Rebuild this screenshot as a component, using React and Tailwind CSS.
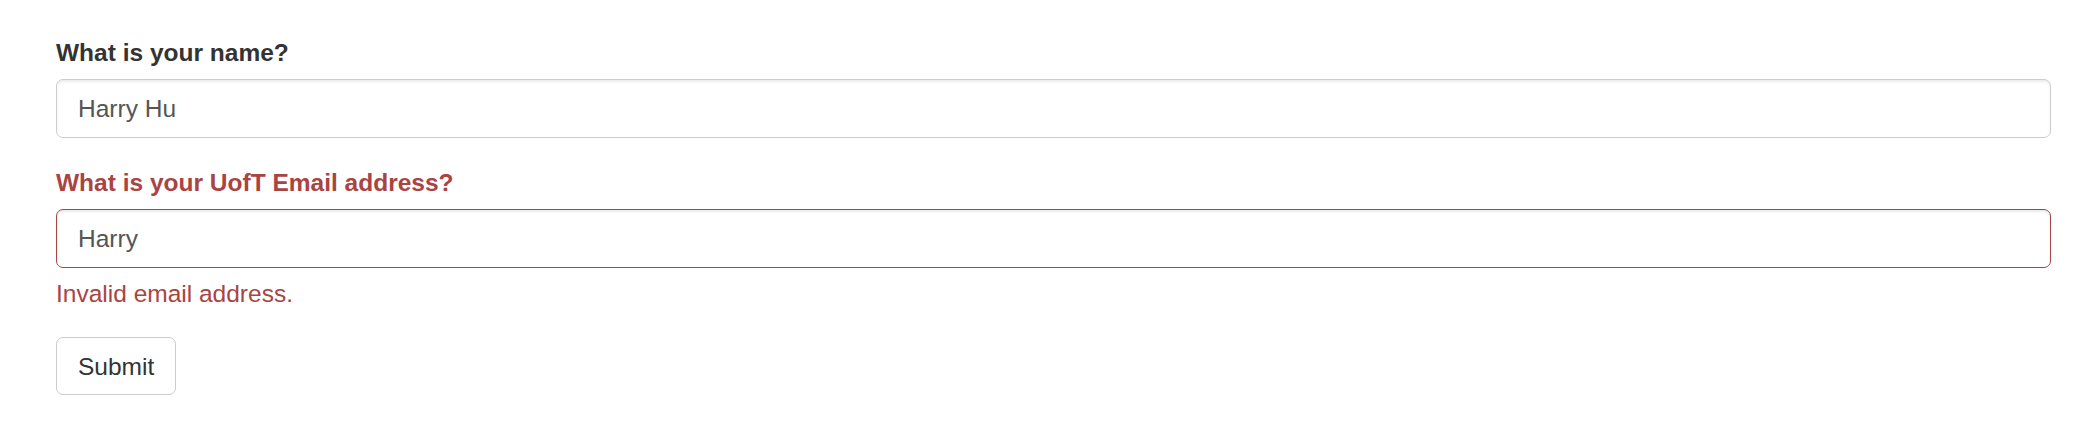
import React, { useState } from 'react';

const App = () => {
  const [name, setName] = useState('Harry Hu');
  const [email, setEmail] = useState('Harry');

  const emailInvalid = !/^[^@\s]+@(mail\.)?utoronto\.ca$/.test(email);

  return (
    <div className="min-h-[436px] bg-white pt-[35px] pl-[56px] pr-[37px] font-['Liberation_Sans',Arial,sans-serif] text-[24.5px] leading-[35px] text-[#333]">
      <form onSubmit={(e) => e.preventDefault()}>
        <div className="mb-[27px]">
          <label className="mb-[9px] block font-bold text-[#333]">What is your name?</label>
          <input
            type="text"
            value={name}
            onChange={(e) => setName(e.target.value)}
            className="block h-[59px] w-full rounded-[7px] border border-[#ccc] bg-white px-[21px] text-[24.5px] text-[#555] shadow-[inset_0_2px_2px_rgba(0,0,0,0.075)] outline-none"
          />
        </div>

        <div className="mb-[26px]">
          <label className={`mb-[9px] block font-bold ${emailInvalid ? 'text-[#a94442]' : 'text-[#333]'}`}>
            What is your UofT Email address?
          </label>
          <input
            type="text"
            value={email}
            onChange={(e) => setEmail(e.target.value)}
            className={`block h-[59px] w-full rounded-[7px] border bg-white px-[21px] text-[24.5px] text-[#555] shadow-[inset_0_2px_2px_rgba(0,0,0,0.075)] outline-none ${
              emailInvalid ? 'border-[#a94442]' : 'border-[#ccc]'
            }`}
          />
          {emailInvalid && (
            <div className="mt-[8px] text-[#a94442]">Invalid email address.</div>
          )}
        </div>

        <button
          type="submit"
          className="h-[58px] rounded-[7px] border border-[#ccc] bg-white px-[21px] text-[24.5px] text-[#333]"
        >
          Submit
        </button>
      </form>
    </div>
  );
};

export default App;
